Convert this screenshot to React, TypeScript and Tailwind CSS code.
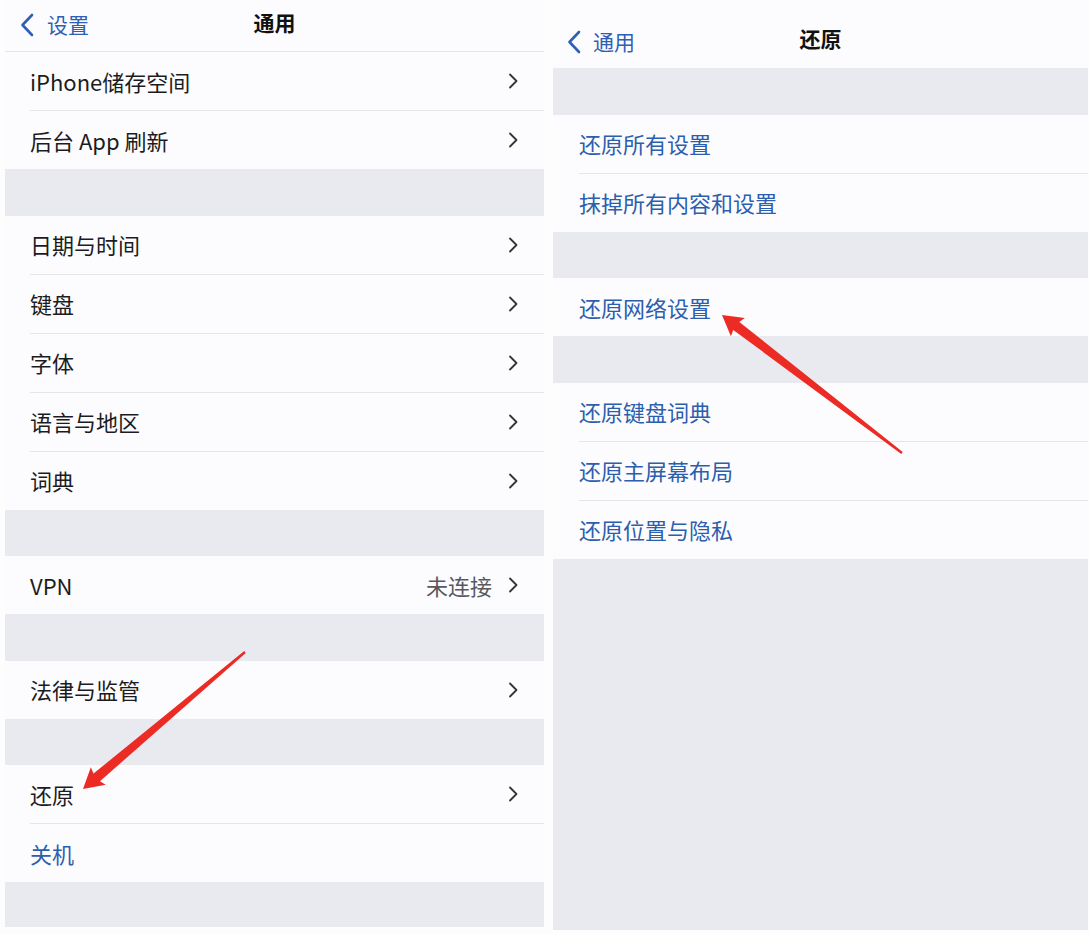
import React from 'react'

type Row = { label: string; value?: string; blue?: boolean; chevron?: boolean }

const FONT = { fontFamily: '"Noto Sans CJK SC", "Noto Sans", sans-serif' }

// settings lists, one array per white group
const leftGroups: Row[][] = [
  [
    { label: 'iPhone储存空间', chevron: true },
    { label: '后台 App 刷新', chevron: true },
  ],
  [
    { label: '日期与时间', chevron: true },
    { label: '键盘', chevron: true },
    { label: '字体', chevron: true },
    { label: '语言与地区', chevron: true },
    { label: '词典', chevron: true },
  ],
  [{ label: 'VPN', value: '未连接', chevron: true }],
  [{ label: '法律与监管', chevron: true }],
  [
    { label: '还原', chevron: true },
    { label: '关机', blue: true },
  ],
]

const rightGroups: Row[][] = [
  [
    { label: '还原所有设置', blue: true },
    { label: '抹掉所有内容和设置', blue: true },
  ],
  [{ label: '还原网络设置', blue: true }],
  [
    { label: '还原键盘词典', blue: true },
    { label: '还原主屏幕布局', blue: true },
    { label: '还原位置与隐私', blue: true },
  ],
]

function Chevron() {
  return (
    <svg width="10" height="16" viewBox="0 0 10 16" className="shrink-0">
      <path d="M2 1.5 L8.5 8 L2 14.5" fill="none" stroke="#333338" strokeWidth="1.8" strokeLinecap="round" strokeLinejoin="round" />
    </svg>
  )
}

function BackChevron() {
  return (
    <svg width="14" height="24" viewBox="0 0 14 24" className="shrink-0">
      <path d="M12 2 L2.5 12 L12 22" fill="none" stroke="#2f5fb5" strokeWidth="2.6" strokeLinecap="round" strokeLinejoin="round" />
    </svg>
  )
}

function Group({ rows, inset }: { rows: Row[]; inset: string }) {
  return (
    <div className="bg-[#fcfcfe]">
      {rows.map((r, i) => (
        <div key={r.label} className={i > 0 ? `border-t border-[#e4e5ea] ${inset}` : ''}>
          <div className={`h-[58px] flex items-center pr-[26px] ${i > 0 ? '' : inset}`}>
            <span className={`flex-1 text-[22px] ${r.blue ? 'text-[#2c5eae]' : 'text-[#1c1c1e]'}`}>{r.label}</span>
            {r.value && <span className="text-[22px] text-[#58585e] mr-[16px]">{r.value}</span>}
            {r.chevron && <Chevron />}
          </div>
        </div>
      ))}
    </div>
  )
}

// red pointer arrow, tapered shaft + head
function arrowPoints(tx: number, ty: number, hx: number, hy: number) {
  const dx = hx - tx
  const dy = hy - ty
  const len = Math.hypot(dx, dy)
  const ux = dx / len
  const uy = dy / len
  const nx = -uy
  const ny = ux
  const headLen = 20
  const bx = hx - ux * headLen
  const by = hy - uy * headLen
  const pts: [number, number][] = [
    [tx + nx * 1.2, ty + ny * 1.2],
    [bx + ux * 2 + nx * 5, by + uy * 2 + ny * 5],
    [bx + nx * 11.5, by + ny * 11.5],
    [hx, hy],
    [bx - nx * 11.5, by - ny * 11.5],
    [bx + ux * 2 - nx * 5, by + uy * 2 - ny * 5],
    [tx - nx * 1.2, ty - ny * 1.2],
  ]
  return pts.map(p => p.join(',')).join(' ')
}

export default function App() {
  return (
    <div className="relative w-[1090px] h-[934px] bg-[#fdfdfe] overflow-hidden flex items-start" style={FONT}>
      {/* left: 通用 */}
      <div className="ml-[5px] w-[539px] h-[927px] bg-[#e9eaf0] flex flex-col">
        <div className="h-[52px] bg-[#fcfcfe] border-b border-[#e4e5ea] relative flex items-center justify-center pb-[6px]">
          <div className="absolute left-[15px] top-[9px] flex items-center gap-[13px]">
            <BackChevron />
            <span className="text-[21px] text-[#2f5fb5]">设置</span>
          </div>
          <span className="text-[21px] font-bold text-[#111]">通用</span>
        </div>
        {leftGroups.map((g, i) => (
          <div key={i} className={i > 0 ? 'mt-[46.5px]' : ''}>
            <Group rows={g} inset="ml-[25px]" />
          </div>
        ))}
      </div>

      {/* right: 还原 */}
      <div className="ml-[9px] w-[535px] h-[930px] bg-[#e9eaf0] flex flex-col">
        <div className="h-[68px] bg-[#fcfcfe] relative flex items-center justify-center pt-[10px]">
          <div className="absolute left-[14px] top-[26px] flex items-center gap-[12px]">
            <BackChevron />
            <span className="text-[21px] text-[#2f5fb5]">通用</span>
          </div>
          <span className="text-[21px] font-bold text-[#111]">还原</span>
        </div>
        {rightGroups.map((g, i) => (
          <div key={i} className="mt-[46.5px]">
            <Group rows={g} inset="ml-[26px]" />
          </div>
        ))}
      </div>

      <svg className="absolute inset-0 pointer-events-none" width="1090" height="934" viewBox="0 0 1090 934">
        <polygon points={arrowPoints(245, 652, 83, 789)} fill="#ec2c24" />
        <polygon points={arrowPoints(902, 453, 722, 315)} fill="#ec2c24" />
      </svg>
    </div>
  )
}
